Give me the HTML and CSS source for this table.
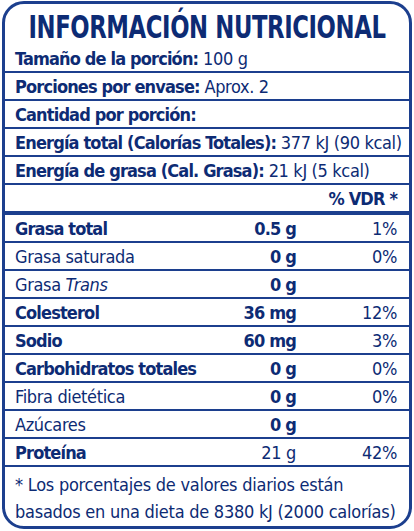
FILE: index.html
```html
<!DOCTYPE html>
<html lang="es">
<head>
  <meta charset="UTF-8">
  <meta name="viewport" content="width=device-width, initial-scale=1.0">
  <title>Información Nutricional</title>
  <link rel="stylesheet" href="styles.css">
</head>
<body>

  <div class="label">
    <h1 class="title"><span>INFORMACIÓN NUTRICIONAL</span></h1>

    <div class="row bold">Tamaño de la porción: <span class="normal">100 g</span></div>
    <div class="row bold">Porciones por envase: <span class="normal">Aprox. 2</span></div>
    <div class="row bold">Cantidad por porción:</div>
    <div class="row bold">Energía total (Calorías Totales): <span class="normal">377 kJ (90 kcal)</span></div>
    <div class="row bold">Energía de grasa (Cal. Grasa): <span class="normal">21 kJ (5 kcal)</span></div>

    <div class="row vdr-row">
      <span class="bold">% VDR *</span>
    </div>

    <div class="row nutrient bold">
      <span>Grasa total</span><span class="amount">0.5 g</span><span class="pct normal">1%</span>
    </div>
    <div class="row nutrient normal">
      <span>Grasa saturada</span><span class="amount bold">0 g</span><span class="pct">0%</span>
    </div>
    <div class="row nutrient normal">
      <span>Grasa <i>Trans</i></span><span class="amount bold">0 g</span><span class="pct"></span>
    </div>
    <div class="row nutrient bold">
      <span>Colesterol</span><span class="amount">36 mg</span><span class="pct normal">12%</span>
    </div>
    <div class="row nutrient bold">
      <span>Sodio</span><span class="amount">60 mg</span><span class="pct normal">3%</span>
    </div>
    <div class="row nutrient bold">
      <span>Carbohidratos totales</span><span class="amount">0 g</span><span class="pct normal">0%</span>
    </div>
    <div class="row nutrient normal">
      <span>Fibra dietética</span><span class="amount bold">0 g</span><span class="pct">0%</span>
    </div>
    <div class="row nutrient normal">
      <span>Azúcares</span><span class="amount bold">0 g</span><span class="pct"></span>
    </div>
    <div class="row nutrient bold">
      <span>Proteína</span><span class="amount normal">21 g</span><span class="pct normal">42%</span>
    </div>

    <p class="footnote">* Los porcentajes de valores diarios están basados en una dieta de 8380 kJ (2000 calorías)</p>
  </div>

</body>
</html>
```

FILE: styles.css
```css
body {
  margin: 0;
  padding: 0;
  background-color: #fff;
  font-family: "DejaVu Sans Condensed", "Liberation Sans", sans-serif;
  color: #0d2b74;
}

.label {
  margin: 1px 2px;
  height: 528px;
  box-sizing: border-box;
  border: 3px solid #1c3f8e;
  border-radius: 22px;
  overflow: hidden;
  display: flex;
  flex-direction: column;
}

.title {
  margin: 0;
  height: 41px;
  display: flex;
  justify-content: center;
  line-height: 46px;
  font-size: 32px;
  font-weight: bold;
  white-space: nowrap;
}

.title span {
  display: inline-block;
  letter-spacing: -0.5px;
  transform: scaleX(0.79);
}

.row {
  height: 28px;
  box-sizing: border-box;
  border-bottom: 2px solid #1c3f8e;
  padding: 0 12px 0 10px;
  line-height: 27px;
  font-size: 18px;
  white-space: nowrap;
}

.bold {
  font-weight: bold;
  letter-spacing: -0.85px;
}

.normal {
  font-weight: normal;
  letter-spacing: -0.35px;
}

.vdr-row {
  height: 30px;
  border-bottom-width: 4px;
  text-align: right;
  line-height: 28px;
}

.nutrient {
  display: grid;
  grid-template-columns: 1fr 90px 101px;
}

.amount,
.pct {
  text-align: right;
}

.footnote {
  flex: 1;
  margin: 0;
  padding: 4px 12px 0 10px;
  font-size: 18px;
  line-height: 27px;
  letter-spacing: -0.25px;
}
```
